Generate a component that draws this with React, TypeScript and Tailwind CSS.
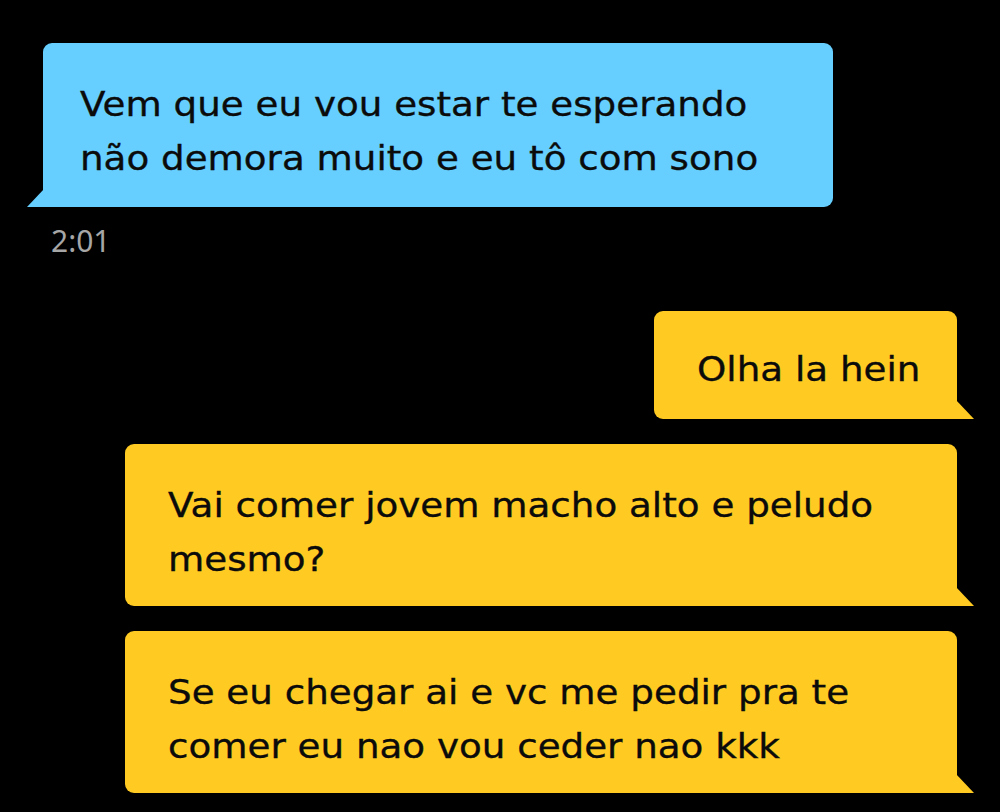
const font = { fontFamily: '"DejaVu Sans", "Noto Sans", sans-serif' };

const TailLeft = ({ color }: { color: string }) => (
  <svg className="absolute bottom-0 left-[-16px]" width="17" height="18" viewBox="0 0 17 18">
    <polygon points="17,0 17,18 0,18" fill={color} />
  </svg>
);

const TailRight = ({ color }: { color: string }) => (
  <svg className="absolute bottom-0 right-[-17px]" width="18" height="19" viewBox="0 0 18 19">
    <polygon points="0,0 18,19 0,19" fill={color} />
  </svg>
);

// the screenshot is a bit wide, so each line is widened from its left edge
const Line = ({ children }: { children: React.ReactNode }) => (
  <p className="origin-left scale-x-[1.095] whitespace-nowrap [-webkit-text-stroke:0.35px_#0b0b0b]">{children}</p>
);

const App: React.FC = () => {
  return (
    <div className="w-[1000px] h-[812px] bg-black overflow-hidden" style={font}>
      <div className="flex flex-col pt-[43px]">
        <div className="pl-[43px]">
          <div className="relative w-[790px] bg-[#66cfff] rounded-t-[9px] rounded-br-[9px] pl-[37px] pt-[34px] pb-[22px] text-[#0b0b0b] text-[34px] leading-[54px]">
            <Line>Vem que eu vou estar te esperando</Line>
            <Line>não demora muito e eu tô com sono</Line>
            <TailLeft color="#66cfff" />
          </div>
        </div>
        <div className="pl-[51px] pt-[19px] text-[30px] leading-[30px] text-[#a6a6a6]" style={{ fontFamily: '"Noto Sans", sans-serif' }}>
          2:01
        </div>

        <div className="flex flex-col items-end pr-[43px] pt-[55px] gap-[25px]">
          <div className="relative w-[303px] bg-[#ffca22] rounded-t-[9px] rounded-bl-[9px] pl-[43px] pt-[31px] pb-[23px] text-[#0b0b0b] text-[34px] leading-[54px]">
            <Line>Olha la hein</Line>
            <TailRight color="#ffca22" />
          </div>
          <div className="relative w-[832px] bg-[#ffca22] rounded-t-[9px] rounded-bl-[9px] pl-[43px] pt-[34px] pb-[20px] text-[#0b0b0b] text-[34px] leading-[54px]">
            <Line>Vai comer jovem macho alto e peludo</Line>
            <Line>mesmo?</Line>
            <TailRight color="#ffca22" />
          </div>
          <div className="relative w-[832px] bg-[#ffca22] rounded-t-[9px] rounded-bl-[9px] pl-[43px] pt-[34px] pb-[20px] text-[#0b0b0b] text-[34px] leading-[54px]">
            <Line>Se eu chegar ai e vc me pedir pra te</Line>
            <Line>comer eu nao vou ceder nao kkk</Line>
            <TailRight color="#ffca22" />
          </div>
        </div>
      </div>
    </div>
  );
};

export default App;
